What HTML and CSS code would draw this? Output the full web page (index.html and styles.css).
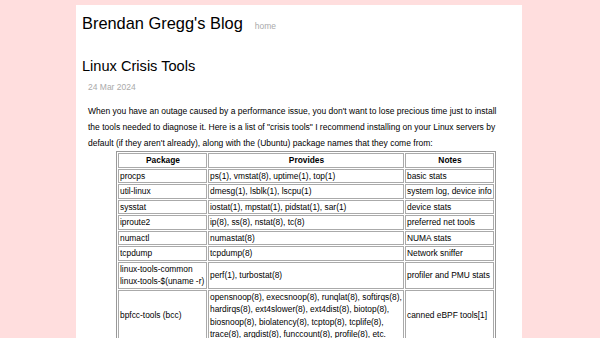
FILE: index.html
```html
<!DOCTYPE html>
<html lang="en">
<head>
  <meta charset="UTF-8">
  <title>Linux Crisis Tools</title>
  <link rel="stylesheet" href="styles.css">
</head>
<body>
  <div class="page">
    <header class="masthead">
      <span class="blog-title">Brendan Gregg's Blog</span>
      <a class="home-link" href="#">home</a>
    </header>

    <article class="post">
      <h1 class="post-title">Linux Crisis Tools</h1>
      <div class="post-body">
        <div class="post-date">24 Mar 2024</div>
        <p class="post-text">When you have an outage caused by a performance issue, you don't want to lose precious time just to install the tools needed to diagnose it. Here is a list of "crisis tools" I recommend installing on your Linux servers by default (if they aren't already), along with the (Ubuntu) package names that they come from:</p>

        <table class="tools">
          <colgroup>
            <col class="col-pkg">
            <col class="col-provides">
            <col class="col-notes">
          </colgroup>
          <tr><th>Package</th><th>Provides</th><th>Notes</th></tr>
          <tr><td>procps</td><td>ps(1), vmstat(8), uptime(1), top(1)</td><td>basic stats</td></tr>
          <tr><td>util-linux</td><td>dmesg(1), lsblk(1), lscpu(1)</td><td>system log, device info</td></tr>
          <tr><td>sysstat</td><td>iostat(1), mpstat(1), pidstat(1), sar(1)</td><td>device stats</td></tr>
          <tr><td>iproute2</td><td>ip(8), ss(8), nstat(8), tc(8)</td><td>preferred net tools</td></tr>
          <tr><td>numactl</td><td>numastat(8)</td><td>NUMA stats</td></tr>
          <tr><td>tcpdump</td><td>tcpdump(8)</td><td>Network sniffer</td></tr>
          <tr><td>linux-tools-common<br>linux-tools-$(uname -r)</td><td>perf(1), turbostat(8)</td><td>profiler and PMU stats</td></tr>
          <tr><td>bpfcc-tools (bcc)</td><td>opensnoop(8), execsnoop(8), runqlat(8), softirqs(8), hardirqs(8), ext4slower(8), ext4dist(8), biotop(8), biosnoop(8), biolatency(8), tcptop(8), tcplife(8), trace(8), argdist(8), funccount(8), profile(8), etc.</td><td>canned eBPF tools[1]</td></tr>
        </table>
      </div>
    </article>
  </div>
</body>
</html>
```

FILE: styles.css
```css
* {
  box-sizing: border-box;
}

body {
  margin: 0;
  background: #ffdede;
  font-family: "Liberation Sans", Arial, sans-serif;
  color: #000;
}

.page {
  width: 446px;
  min-height: 333px;
  margin: 5px 0 0 76px;
  padding: 9px 6px 0;
  background: #fff;
}

.masthead {
  display: flex;
  align-items: baseline;
  gap: 12px;
}

.blog-title {
  font-size: 16.4px;
  line-height: 18px;
}

.home-link {
  font-size: 8.5px;
  color: #aaa;
  text-decoration: none;
}

.post-title {
  margin: 26px 0 0;
  font-size: 14.6px;
  font-weight: normal;
  line-height: 17px;
}

.post-body {
  margin-left: 6px;
  font-size: 8.5px;
}

.post-date {
  margin-top: 7px;
  line-height: 10px;
  color: #aaa;
}

.post-text {
  width: 415px;
  margin: 11px 0 0;
  line-height: 16px;
}

.tools {
  margin-left: 28px;
  width: 380px;
  table-layout: fixed;
  border: 1px solid #999;
  border-spacing: 1px;
  font-size: 8.4px;
}

.col-pkg { width: 89px; }
.col-provides { width: 196px; }
.col-notes { width: 89px; }

.tools th,
.tools td {
  border: 1px solid #aaa;
  padding: 0 0 0 1px;
  line-height: 12.5px;
}

.tools th {
  font-weight: bold;
}
```
